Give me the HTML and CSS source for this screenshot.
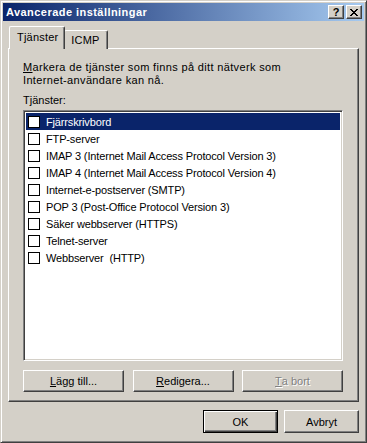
FILE: index.html
```html
<!DOCTYPE html>
<html lang="sv">
<head>
  <meta charset="UTF-8" />
  <title>Avancerade inställningar</title>
  <link rel="stylesheet" href="styles.css">
</head>
<body>
  <div class="window">
    <div class="titlebar">
      <span class="title">Avancerade inställningar</span>
      <div class="caption-buttons">
        <div class="cap-btn help">?</div>
        <div class="cap-btn close">
          <svg width="8" height="7" viewBox="0 0 8 7">
            <path d="M0 0h2v1h-2zM6 0h2v1h-2zM1 1h2v1h-2zM5 1h2v1h-2zM2 2h4v1h-4zM3 3h2v1h-2zM2 4h4v1h-4zM1 5h2v1h-2zM5 5h2v1h-2zM0 6h2v1h-2zM6 6h2v1h-2z" fill="#000"/>
          </svg>
        </div>
      </div>
    </div>

    <div class="content">
      <div class="tabs">
        <div class="tab active">Tjänster</div>
        <div class="tab">ICMP</div>
      </div>

      <div class="panel">
        <p class="intro"><u>M</u>arkera de tjänster som finns på ditt nätverk som<br>Internet-användare kan nå.</p>
        <div class="label">Tjänster:</div>
        <ul class="list">
          <li class="selected"><span class="check"></span>Fjärrskrivbord</li>
          <li><span class="check"></span>FTP-server</li>
          <li><span class="check"></span>IMAP 3 (Internet Mail Access Protocol Version 3)</li>
          <li><span class="check"></span>IMAP 4 (Internet Mail Access Protocol Version 4)</li>
          <li><span class="check"></span>Internet-e-postserver (SMTP)</li>
          <li><span class="check"></span>POP 3 (Post-Office Protocol Version 3)</li>
          <li><span class="check"></span>Säker webbserver (HTTPS)</li>
          <li><span class="check"></span>Telnet-server</li>
          <li><span class="check"></span>Webbserver &nbsp;(HTTP)</li>
        </ul>
        <div class="row-buttons">
          <div class="btn"><u>L</u>ägg till...</div>
          <div class="btn"><u>R</u>edigera...</div>
          <div class="btn disabled"><u>T</u>a bort</div>
        </div>
      </div>

      <div class="dialog-buttons">
        <div class="btn default">OK</div>
        <div class="btn">Avbryt</div>
      </div>
    </div>
  </div>
</body>
</html>
```

FILE: styles.css
```css
* {
  margin: 0;
  padding: 0;
  box-sizing: border-box;
}

body {
  background: #d4d0c8;
  font-family: 'Liberation Sans', Arial, sans-serif;
  font-size: 11px;
  color: #000;
}

.window {
  width: 367px;
  height: 443px;
  background: #d4d0c8;
  border: 1px solid;
  border-color: #d4d0c8 #404040 #404040 #d4d0c8;
  box-shadow: inset 1px 1px #fff, inset -1px -1px #808080;
  padding: 2px;
}

.titlebar {
  height: 18px;
  background: linear-gradient(to right, #0a246a, #a6caf0);
  display: flex;
  align-items: center;
  justify-content: space-between;
  padding: 0 2px 0 3px;
}

.title {
  color: #fff;
  font-weight: bold;
  font-size: 11px;
  letter-spacing: 0.45px;
}

.caption-buttons {
  display: flex;
  gap: 2px;
}

.cap-btn {
  width: 16px;
  height: 14px;
  background: #d4d0c8;
  border: 1px solid;
  border-color: #fff #404040 #404040 #fff;
  box-shadow: inset -1px -1px #808080;
  display: flex;
  align-items: center;
  justify-content: center;
  font-weight: bold;
  font-size: 11px;
  line-height: 1;
}

.content {
  padding: 6px 5px 0 5px;
}

.tabs {
  display: flex;
  align-items: flex-end;
  height: 22px;
  position: relative;
  z-index: 1;
  margin-bottom: -1px;
  padding-left: 1px;
}

.tab {
  height: 19px;
  padding: 3px 7px 0 6px;
  background: #d4d0c8;
  border-top: 1px solid #fff;
  border-left: 1px solid #fff;
  border-right: 1px solid #404040;
  box-shadow: inset -1px 0 #808080;
  border-radius: 2px 2px 0 0;
  letter-spacing: 0.2px;
}

.tab.active {
  height: 23px;
  padding: 4px 6px 0 7px;
  margin-right: -1px;
  position: relative;
  z-index: 2;
}

.panel {
  height: 354px;
  border: 1px solid;
  border-color: #fff #404040 #404040 #fff;
  box-shadow: inset -1px -1px #808080;
  padding: 12px 15px 9px 14px;
  display: flex;
  flex-direction: column;
}

.intro {
  line-height: 13px;
  letter-spacing: 0.35px;
}

.label {
  line-height: 13px;
  margin-top: 7px;
}

.list {
  list-style: none;
  margin-top: 3px;
  flex: 1;
  background: #fff;
  border: 1px solid;
  border-color: #808080 #fff #fff #808080;
  box-shadow: inset 1px 1px #404040, inset -1px -1px #d4d0c8;
  padding: 2px;
}

.list li {
  height: 17px;
  display: flex;
  align-items: center;
  white-space: nowrap;
  padding-left: 2px;
  letter-spacing: -0.15px;
}

.list li.selected {
  background: #0a246a;
  color: #fff;
}

.check {
  width: 12px;
  height: 12px;
  border: 1px solid #000;
  background: #fff;
  margin-right: 6px;
  flex: none;
}

.row-buttons {
  display: flex;
  justify-content: space-between;
  margin-top: 9px;
}

.row-buttons .btn {
  width: 101px;
}

.btn {
  height: 22px;
  background: #d4d0c8;
  border: 1px solid;
  border-color: #fff #404040 #404040 #fff;
  box-shadow: inset -1px -1px #808080;
  display: flex;
  align-items: center;
  justify-content: center;
}

.btn.disabled {
  color: #808080;
  text-shadow: 1px 1px #fff;
}

.dialog-buttons {
  display: flex;
  justify-content: flex-end;
  gap: 6px;
  margin-top: 8px;
}

.dialog-buttons .btn {
  width: 75px;
  height: 23px;
}

.btn.default {
  border: 1px solid #000;
  box-shadow: inset 1px 1px #fff, inset -1px -1px #404040, inset -2px -2px #808080;
}
```
